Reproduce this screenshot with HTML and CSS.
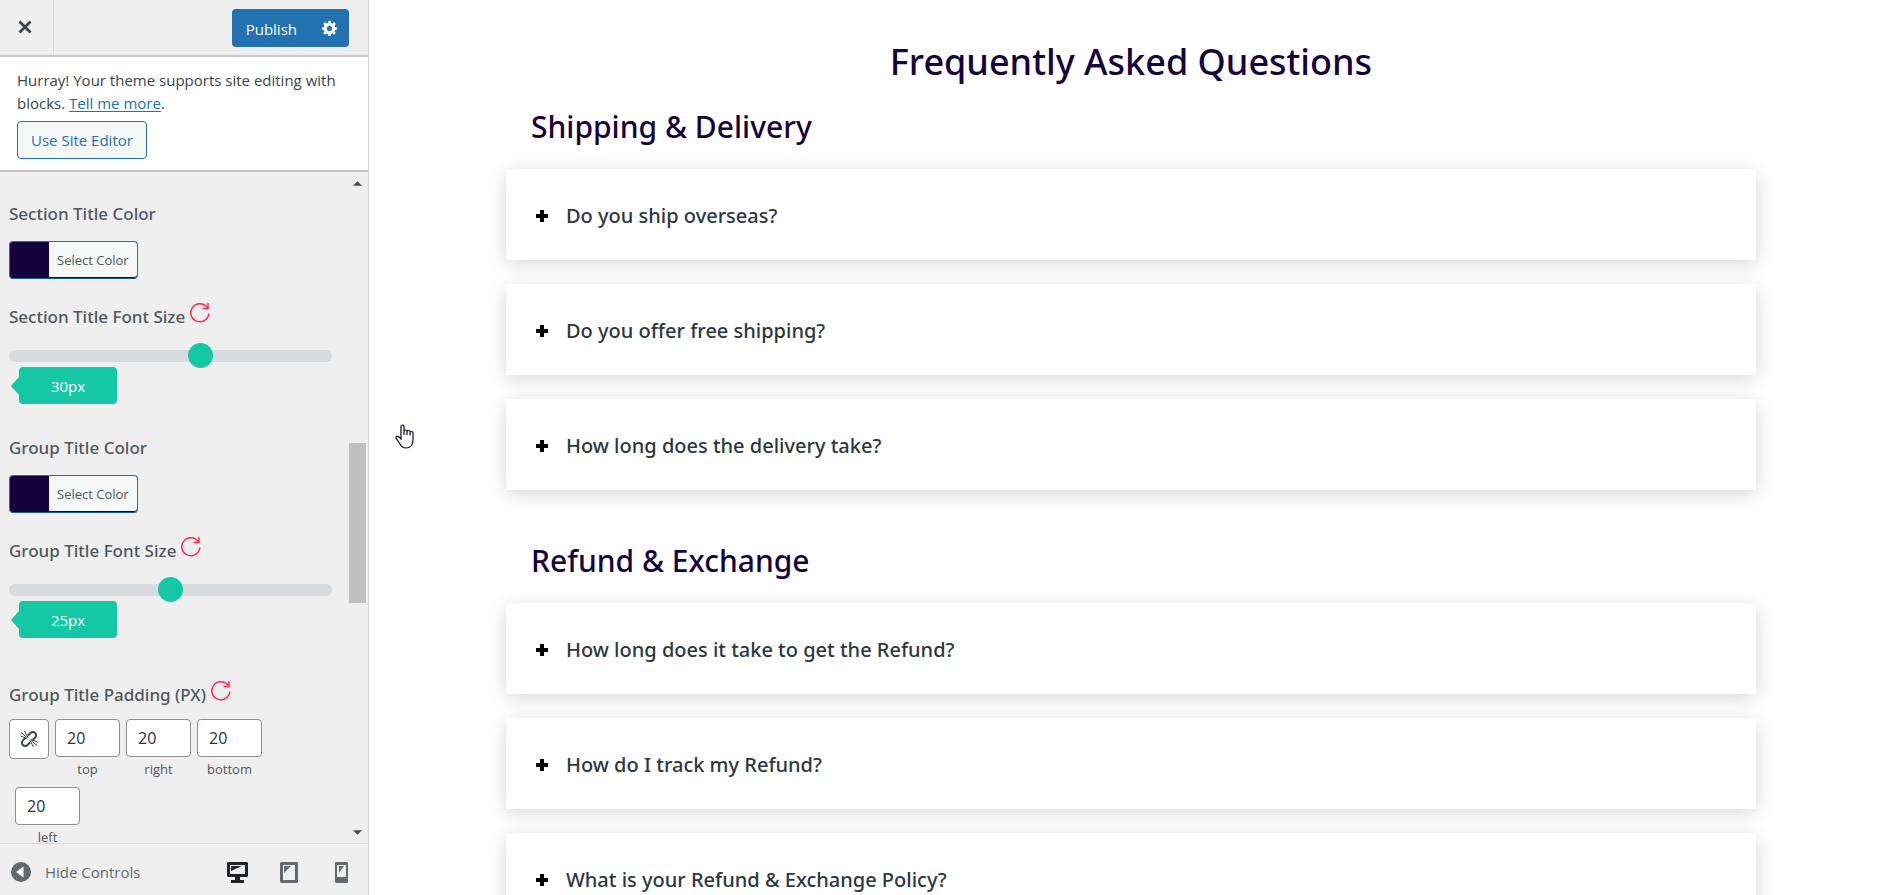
FILE: index.html
```html
<!DOCTYPE html>
<html lang="en">
<head>
<meta charset="utf-8">
<title>Customize: Frequently Asked Questions</title>
<link rel="stylesheet" href="styles.css">
</head>
<body>
<svg class="defs" aria-hidden="true">
  <symbol id="reset" viewBox="0 0 20 20"><path d="M17 4.300A9 9 0 1 0 18.800 10.500M18 0v5.500h-5.500" fill="none" stroke="currentColor" stroke-width="1.500"/></symbol>
  <symbol id="plus" viewBox="0 0 12 12"><path d="M4 0h4v4h4v4H8v4H4V8H0V4h4z" fill="currentColor"/></symbol>
</svg>
<div class="customizer">
  <aside class="sidebar">
    <header class="topbar">
      <button class="close" type="button" aria-label="Close">
        <svg viewBox="0 0 14 14"><path d="M1.500 1.500l11 11M12.500 1.500l-11 11" stroke="currentColor" stroke-width="2.800"/></svg>
      </button>
      <div class="publish-group">
        <button class="publish" type="button">Publish</button>
        <button class="gear" type="button" aria-label="Publish settings">
          <svg viewBox="0 0 20 20"><path fill="currentColor" fill-rule="evenodd" d="M18 12h-2.180c-.170.700-.440 1.350-.810 1.930l1.540 1.540-2.100 2.100-1.540-1.540c-.580.360-1.230.630-1.910.790V19H8v-2.180c-.680-.160-1.330-.430-1.910-.790l-1.540 1.540-2.120-2.120 1.540-1.540c-.360-.580-.630-1.230-.790-1.910H1V9.030h2.170c.160-.700.440-1.350.800-1.940L2.430 5.550l2.100-2.100 1.540 1.540c.580-.370 1.240-.640 1.930-.810V2h3v2.180c.680.160 1.330.430 1.910.790l1.540-1.540 2.120 2.120-1.540 1.540c.360.590.640 1.240.800 1.940H18V12zm-8.500 1.500c1.660 0 3-1.340 3-3s-1.340-3-3-3-3 1.340-3 3 1.340 3 3 3z"/></svg>
        </button>
      </div>
    </header>
    <section class="notice">
      <p class="notice-text">Hurray! Your theme supports site editing with blocks. <a href="#">Tell me more</a>.</p>
      <button class="site-editor" type="button">Use Site Editor</button>
    </section>
    <div class="panel">
      <div class="controls">
        <div class="control">
          <span class="label">Section Title Color</span>
          <button class="color" type="button"><span class="swatch"></span><span class="color-text">Select Color</span></button>
        </div>
        <div class="control">
          <div class="label-row"><label class="label" for="section-size">Section Title Font Size</label><button class="reset" type="button" aria-label="Reset"><svg><use href="#reset"/></svg></button></div>
          <input class="slider" id="section-size" type="range" min="0" max="50" value="30">
          <output class="bubble" for="section-size">30px</output>
        </div>
        <div class="control">
          <span class="label">Group Title Color</span>
          <button class="color" type="button"><span class="swatch"></span><span class="color-text">Select Color</span></button>
        </div>
        <div class="control">
          <div class="label-row"><label class="label" for="group-size">Group Title Font Size</label><button class="reset" type="button" aria-label="Reset"><svg><use href="#reset"/></svg></button></div>
          <input class="slider" id="group-size" type="range" min="0" max="50" value="25">
          <output class="bubble" for="group-size">25px</output>
        </div>
        <div class="control padding-control">
          <div class="label-row"><span class="label">Group Title Padding (PX)</span><button class="reset" type="button" aria-label="Reset"><svg><use href="#reset"/></svg></button></div>
          <div class="sides">
            <button class="link" type="button" aria-label="Link values"><svg viewBox="0 0 18 18" fill="none" stroke="currentColor"><path stroke-width="2" d="M8 5.500l2.500-2.500a3.200 3.200 0 0 1 4.600 0a3.200 3.200 0 0 1 0 4.600l-2.400 2.400M10 12.500l-2.500 2.500a3.200 3.200 0 0 1-4.600 0a3.200 3.200 0 0 1 0-4.600l2.400-2.400"/><path stroke-width="1" d="M1 2.500l6.500 5.500M4.500 1l3.500 6.500M.500 6l6.500 2.500M17 15.500l-6.500-5.500M13.500 17l-3.500-6.500M17.500 12l-6.500-2.500"/></svg></button>
            <label class="side"><input type="text" value="20"><span>top</span></label>
            <label class="side"><input type="text" value="20"><span>right</span></label>
            <label class="side"><input type="text" value="20"><span>bottom</span></label>
            <label class="side side-left"><input type="text" value="20"><span>left</span></label>
          </div>
        </div>
      </div>
      <div class="scrollbar" aria-hidden="true">
        <svg class="arrow" viewBox="0 0 10 5"><path d="M0 5l5-5 5 5z" fill="currentColor"/></svg>
        <div class="track"><div class="thumb"></div></div>
        <svg class="arrow" viewBox="0 0 10 5"><path d="M0 0l5 5 5-5z" fill="currentColor"/></svg>
      </div>
    </div>
    <footer class="footer">
      <button class="hide" type="button">
        <svg viewBox="0 0 20 20"><circle cx="10" cy="10" r="10" fill="#646970"/><path d="M12.500 4.500v11L5 10z" fill="#fff"/></svg>
        Hide Controls
      </button>
      <div class="devices">
        <button class="active" type="button" aria-label="Desktop"><svg width="21" height="21" viewBox="0 0 21 21"><path fill="currentColor" fill-rule="evenodd" d="M1 0h19l1 1v13l-1 1h-7v3h4v3H4v-3h4v-3H1l-1-1V1zM3 3v9h15V3z"/><path fill="currentColor" d="M4 4h11L4 9z"/></svg></button>
        <button type="button" aria-label="Tablet"><svg width="18" height="21" viewBox="0 0 18 21"><path fill="currentColor" fill-rule="evenodd" d="M1 0h16l1 1v19l-1 1H1l-1-1V1zM3 3v15h12V3z"/><path fill="currentColor" d="M4 4h7l-7 7z"/></svg></button>
        <button type="button" aria-label="Mobile"><svg width="13" height="21" viewBox="0 0 13 21"><path fill="currentColor" fill-rule="evenodd" d="M1 0h11l1 1v19l-1 1H1l-1-1V1zM2 3v12h9V3z"/><path fill="currentColor" d="M4 4h5l-5 7z"/></svg></button>
      </div>
    </footer>
  </aside>
  <main class="preview">
    <div class="faq">
      <h1>Frequently Asked Questions</h1>
      <section class="group">
        <h2>Shipping &amp; Delivery</h2>
        <button class="card" type="button"><svg><use href="#plus"/></svg>Do you ship overseas?</button>
        <button class="card" type="button"><svg><use href="#plus"/></svg>Do you offer free shipping?</button>
        <button class="card" type="button"><svg><use href="#plus"/></svg>How long does the delivery take?</button>
      </section>
      <section class="group">
        <h2>Refund &amp; Exchange</h2>
        <button class="card" type="button"><svg><use href="#plus"/></svg>How long does it take to get the Refund?</button>
        <button class="card" type="button"><svg><use href="#plus"/></svg>How do I track my Refund?</button>
        <button class="card" type="button"><svg><use href="#plus"/></svg>What is your Refund &amp; Exchange Policy?</button>
      </section>
    </div>
  </main>
  <svg class="cursor" viewBox="0 0 19 25" aria-hidden="true"><path d="M6 15V2.500a1.500 1.500 0 0 1 3 0V11V7.500a1.500 1.500 0 0 1 3 0V11V8a1.500 1.500 0 0 1 3 0v3.500V9a1.500 1.500 0 0 1 3 0v7c0 5-3 8-7 8c-4 0-5-2-6-4l-4-6c-.500-1.500 1.500-2.500 3-1z" fill="#fff" stroke="#0b0b24" stroke-width="1.200"/></svg>
</div>
</body>
</html>
```
FILE: styles.css
```css
* { box-sizing: border-box; }
body {
  margin: 0;
  font-family: "Open Sans", "Noto Sans", sans-serif;
  color: #3c434a;
  background: #fff;
}
button, input { font: inherit; color: inherit; }
button { padding: 0; border: 0; background: none; cursor: pointer; }
svg { display: block; }
.defs { position: absolute; width: 0; height: 0; }

.customizer { display: flex; height: 100vh; overflow: hidden; position: relative; }

.sidebar {
  flex: none;
  width: 369px;
  display: flex;
  flex-direction: column;
  background: #efefef;
  border-right: 1px solid #d5d6d9;
  font-size: 15px;
}

.topbar {
  flex: none;
  height: 57px;
  display: flex;
  justify-content: space-between;
  border-bottom: 2px solid #c9cace;
}
.close {
  width: 54px;
  display: grid;
  place-items: center;
  padding: 0 4px 2px 0;
  border-right: 1px solid #d5d6d9;
}
.close svg { width: 14px; height: 14px; }
.publish-group { display: flex; margin: 9px 19px 8px 0; border-radius: 4px; background: #2271b1; color: #fff; }
.publish { padding: 2px 14px 0; }
.gear { width: 38px; display: grid; place-items: center; }
.gear svg { width: 18px; height: 18px; }

.notice {
  flex: none;
  padding: 12px 17px 11px;
  background: #fff;
  border-bottom: 2px solid #c3c4c9;
}
.notice-text { margin: 0 0 6px; line-height: 23px; }
.notice a { color: #2271b1; text-underline-offset: 2px; }
.site-editor {
  height: 38px;
  padding: 0 13px;
  border: 1px solid #2271b1;
  border-radius: 4px;
  background: #f6f7f7;
  color: #2271b1;
}

.panel { flex: 1; min-height: 0; display: flex; }
.controls { flex: 1; min-width: 0; overflow: hidden; padding: 28px 17px 0 9px; }
.control { display: flex; flex-direction: column; align-items: flex-start; }
.label { font-family: "Noto Sans", sans-serif; font-size: 17px; font-weight: 500; line-height: 28px; color: #50575e; }
.label-row { display: flex; gap: 5px; }
.reset { width: 20px; height: 20px; color: #ff2650; }
.reset svg { width: 20px; height: 20px; }
.color {
  display: flex;
  height: 38px;
  margin: 13px 0 24px;
  border: 1px solid #2271b1;
  border-bottom-color: #135e96;
  border-radius: 4px;
  background: #f6f7f7;
  box-shadow: inset 0 -1px #15033d;
  overflow: hidden;
  color: #50575e;
  font-size: 13px;
  line-height: 36px;
}
.swatch { width: 39px; background: #15033d; }
.color-text { padding: 0 8px; }
.slider {
  appearance: none;
  width: 100%;
  height: 25px;
  margin: 12px 0 0;
  background: none;
}
.slider::-webkit-slider-runnable-track { height: 12px; border-radius: 6px; background: #d7dbde; }
.slider::-webkit-slider-thumb {
  appearance: none;
  width: 25px;
  height: 25px;
  margin-top: -7px;
  border-radius: 50%;
  background: #15c8a5;
}
.bubble {
  position: relative;
  width: 98px;
  margin: -1px 0 30px 10px;
  padding-top: 2px;
  border-radius: 4px;
  background: #15c8a5;
  color: #fff;
  font-size: 15px;
  line-height: 35px;
  text-align: center;
}
.bubble::before {
  content: "";
  position: absolute;
  left: -8px;
  top: 10px;
  border: solid transparent;
  border-width: 9px 8px 9px 0;
  border-right-color: #15c8a5;
}
.padding-control { margin-top: 13px; }
.sides { display: flex; flex-wrap: wrap; gap: 6px; margin-top: 10px; }
.link {
  width: 40px;
  height: 40px;
  display: grid;
  place-items: center;
  border: 1px solid #8c8f94;
  border-radius: 4px;
  background: #fff;
}
.link svg { width: 18px; height: 18px; }
.side { width: 65px; font-size: 13px; text-align: center; line-height: 24px; color: #50575e; }
.side input {
  display: block;
  width: 100%;
  height: 38px;
  padding: 0 11px;
  border: 1px solid #8c8f94;
  border-radius: 4px;
  background: #fff;
  color: #2c3338;
  font-size: 16px;
}
.side-left { margin-left: 6px; }

.scrollbar {
  flex: none;
  width: 19px;
  padding: 9px 2px 8px 0;
  display: flex;
  flex-direction: column;
  align-items: center;
  gap: 6px;
}
.arrow { width: 9px; height: 5px; color: #4a4a4a; }
.track { flex: 1; align-self: stretch; padding-top: 251px; }
.thumb { height: 160px; background: #c0c0c0; }

.footer {
  flex: none;
  height: 52px;
  display: flex;
  align-items: center;
  justify-content: space-between;
  padding: 5px 1px 0 11px;
  border-top: 1px solid #dcdcde;
  color: #646970;
}
.hide { display: flex; align-items: center; gap: 14px; }
.hide svg { width: 20px; height: 20px; }
.devices { display: flex; }
.devices button { width: 52px; display: grid; place-items: center; }
.devices .active { color: #1d2327; }

.preview { flex: 1; min-width: 0; padding: 40px 40px 0 42px; overflow: hidden; }
.faq { max-width: 1250px; margin: 0 auto; font-family: "Noto Sans", sans-serif; }
h1, h2 { margin: 0; font-weight: 500; color: #15033d; }
h1 { font-size: 36px; line-height: 44px; text-align: center; }
h2 { padding: 0 25px; font-size: 30px; line-height: 36px; }
.group { display: flex; flex-direction: column; gap: 24px; padding-top: 25px; }
.group + .group { padding-top: 53px; }
.card {
  display: flex;
  align-items: center;
  gap: 18px;
  height: 91px;
  padding: 2px 30px 0;
  background: #fff;
  box-shadow: 0 4px 18px rgba(0, 0, 0, .16);
  color: #2c3840;
  font-size: 20px;
  font-weight: 500;
  text-align: left;
}
.card svg { width: 12px; height: 12px; color: #000; }

.cursor { position: absolute; left: 395px; top: 424px; width: 19px; height: 25px; }
```
